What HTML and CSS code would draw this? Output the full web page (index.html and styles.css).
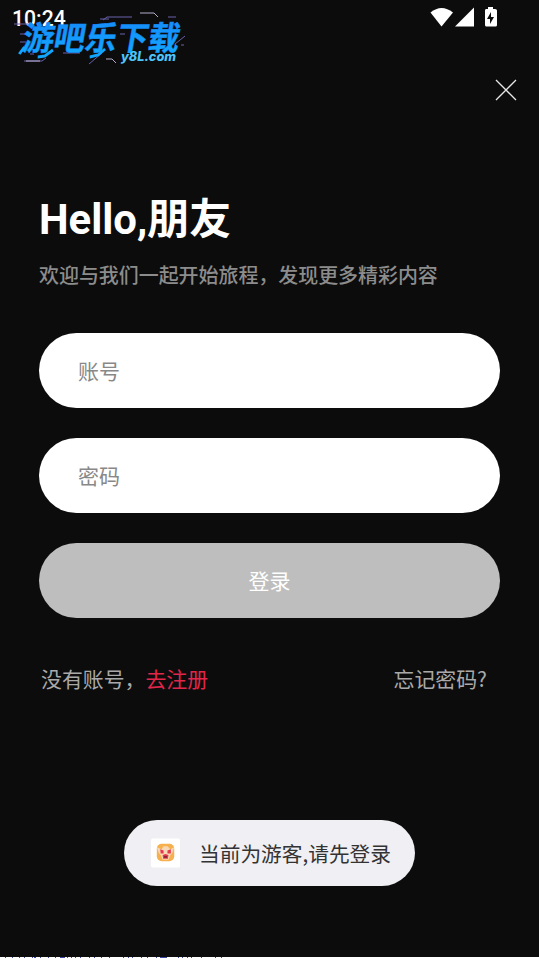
FILE: index.html
```html
<!DOCTYPE html>
<html lang="zh-CN">
<head>
<meta charset="utf-8">
<title>登录</title>
<link rel="stylesheet" href="styles.css">
</head>
<body>
<div class="screen">
  <header class="status">
    <span class="clock">10:24</span>
    <svg class="status-icons" width="68" height="22" viewBox="0 0 68 22">
      <path d="M1.500 5.500Q12.500 -3.500 24 5.500L12.500 19.500Z"/>
      <path d="M26 19.500H45V0.500Z"/>
      <path fill-rule="evenodd" d="M56 2H59V0H64V2H66Q68 2 68 3.500V18Q68 19.500 66.500 19.500H57.500Q56 19.500 56 18V3.500Q56 2 57 2ZM62 5L58 12H61V17L65 10H62Z"/>
    </svg>
  </header>
  <svg class="brand" width="190" height="66" viewBox="0 0 190 66">
    <defs>
      <linearGradient id="blue" x1="0" y1="0" x2="0" y2="1">
        <stop offset="0" stop-color="#1684f8"/><stop offset="1" stop-color="#12adff"/>
      </linearGradient>
    </defs>
    <g class="circuit">
      <path d="M4 14H18M90 9H99M93 10L97 7H122M158 7H166M10 24H20M10 32H16M53 43H70M20 44H24M14 51H32L36 48M79 54L92 43M165 34L175 26M110 24H115M171 35H174"/>
      <path class="bright" d="M130 3H144L148 7M96 49H102L106 53M16 51H30"/>
    </g>
    <g transform="skewX(-10)">
      <text class="brand-name" x="18" y="40" textLength="157" lengthAdjust="spacingAndGlyphs" fill="url(#blue)">游吧乐下载</text>
      <path class="blade" d="M21 37L17 44M50 40L43 46L36 47M102 39L96 45L88 47"/>
    </g>
    <text class="brand-site" x="111" y="51" textLength="55" lengthAdjust="spacingAndGlyphs">y8L.com</text>
  </svg>
  <button class="close" aria-label="关闭">
    <svg width="22" height="22" viewBox="0 0 22 22"><path d="M1 1L21 21M21 1L1 21"/></svg>
  </button>
  <main class="login">
    <h1>Hello,朋友</h1>
    <p class="intro">欢迎与我们一起开始旅程，发现更多精彩内容</p>
    <form class="form">
      <input class="field" type="text" placeholder="账号">
      <input class="field" type="password" placeholder="密码">
      <button class="submit" type="button">登录</button>
    </form>
    <div class="links">
      <span>没有账号，<a>去注册</a></span>
      <a class="forgot">忘记密码?</a>
    </div>
  </main>
  <div class="toast">
    <svg class="toast-icon" width="30" height="30" viewBox="0 0 30 30">
      <rect width="30" height="30" rx="2" fill="#fff"/>
      <rect x="6" y="5.500" width="18" height="18" rx="5" fill="#f6b04e"/>
      <path d="M6 9L11 11L13 8H17L20 11L24 9L22 15L20 17L18 22H12L10 17L8 15Z" fill="#f7d8b5"/>
      <path d="M9.500 11L13 12.500V15.500H10ZM17 12.500L20.500 11V15.500H17ZM12 17L15 16L18 17L17.500 21H12.500Z" fill="#e63950"/>
      <path d="M13.500 18H16.500V20H13.500Z" fill="#8e2632"/>
    </svg>
    <span>当前为游客,请先登录</span>
  </div>
  <svg class="edge" width="539" height="1" viewBox="0 0 539 1">
    <path d="M0 .5H539" stroke="#fff"/>
    <path stroke="#3c46aa" d="M5 .5h1m6 0h1m6 0h1m4 0h1m7 0h1m1 0h2m4 0h1m7 0h1m6 0h1m4 0h5m2 0h1m3 0h1m3 0h1m4 0h1m8 0h1m4 0h1m6 0h1m7 0h1m13 0h1m4 0h1m3 0h1m8 0h1m5 0h1m8 0h1m3 0h7m11 0h1m3 0h1m4 0h1m3 0h1m9 0h1m13 0h1m5 0h1"/>
  </svg>
</div>
</body>
</html>
```
FILE: styles.css
```css
* { box-sizing: border-box; }
body { margin: 0; background: #0c0c0c; }
.screen {
  position: relative;
  display: flex;
  flex-direction: column;
  width: 539px;
  height: 958px;
  overflow: hidden;
  background: #0c0c0c;
  font-family: Roboto, "Noto Sans CJK SC", sans-serif;
}
.status {
  display: flex;
  justify-content: space-between;
  height: 79px;
  padding: 7px 42px 0 12px;
}
.clock { color: #fff; font-size: 21.200px; line-height: 24px; font-weight: 500; }
.status-icons { fill: #fff; }
.brand { position: absolute; left: 10px; top: 10px; overflow: visible; }
.brand-name { font: 700 33px "Noto Sans CJK SC", sans-serif; stroke: #148ff9; stroke-width: .5; }
.blade { fill: none; stroke: #12a5ff; stroke-width: 3; }
.brand-site { fill: #4bc5fa; font: italic 800 12.500px Inter, sans-serif; }
.circuit path { fill: none; stroke: #6860ac; stroke-width: 1; }
.circuit .bright { stroke: #b5accb; }
.close {
  align-self: flex-end;
  width: 22px;
  height: 22px;
  margin-right: 22px;
  padding: 0;
  border: 0;
  background: none;
}
.close svg { display: block; fill: none; stroke: #e8e8e8; stroke-width: 1.3; }
.login { padding: 89px 39px 0; }
h1 { margin: 0; color: #fff; font-size: 41.900px; line-height: 60px; font-weight: 700; }
.intro { margin: 11px 0 0; color: #8c8c8c; font-size: 19.950px; line-height: 30px; font-weight: 500; white-space: nowrap; }
.form { display: flex; flex-direction: column; gap: 30px; margin-top: 42px; }
.field, .submit {
  width: 461px;
  height: 75px;
  border: 0;
  border-radius: 38px;
  font: 400 21px/30px Roboto, "Noto Sans CJK SC", sans-serif;
}
.field { padding: 2px 39px 0; background: #fff; outline: 0; }
.field::placeholder { color: #888; opacity: 1; }
.submit { padding: 2px 0 0; background: #bebebe; color: #fff; }
.links { display: flex; justify-content: space-between; margin-top: 45px; padding: 0 13px 0 2px; color: #a9a9a9; font-family: "Noto Sans CJK SC", sans-serif; font-size: 20.900px; line-height: 30px; }
.links span a { color: #e2264b; }
.toast {
  display: flex;
  align-items: center;
  align-self: center;
  gap: 19px;
  width: 291px;
  height: 66px;
  margin-top: 127px;
  padding: 0 24px 0 27px;
  border-radius: 33px;
  background: #f0eff4;
  color: #333;
  font-family: "Noto Sans CJK SC", sans-serif;
  font-size: 20.700px;
  white-space: nowrap;
}
.edge { display: block; margin-top: auto; }
```
